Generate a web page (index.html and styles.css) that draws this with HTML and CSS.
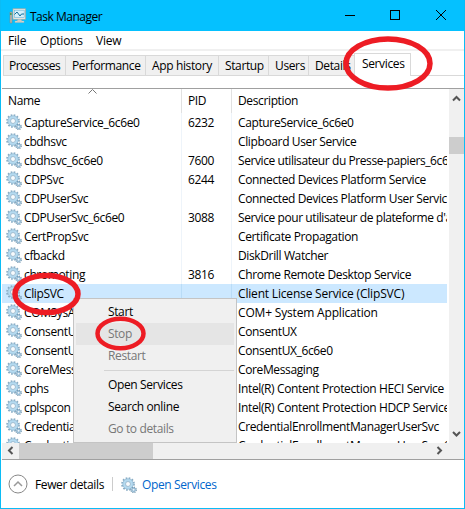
FILE: index.html
```html
<!DOCTYPE html>
<html lang="en">
<head>
<meta charset="utf-8">
<title>Task Manager</title>
<link rel="stylesheet" href="styles.css">
</head>
<body>
<svg class="defs" width="0" height="0">
  <symbol id="gear" viewBox="0 0 16 16">
    <circle cx="7" cy="7" r="5.9" fill="none" stroke="#85a9c2" stroke-width="1.9" stroke-dasharray="1.65 1.44"/>
    <circle cx="7" cy="7" r="4" fill="none" stroke="#b4daf0" stroke-width="2.8"/>
    <circle cx="7" cy="7" r="5.2" fill="none" stroke="#8eb3cc" stroke-width=".6"/>
    <circle cx="7" cy="7" r="2.5" fill="#f8fbfd" stroke="#7fa5c0" stroke-width=".7"/>
    <circle cx="12.6" cy="12.8" r="2.5" fill="none" stroke="#7195ae" stroke-width="1.5" stroke-dasharray="1.1 .86"/>
    <circle cx="12.6" cy="12.8" r="1.6" fill="#eef5fa" stroke="#91b9d4" stroke-width="1.2"/>
  </symbol>
</svg>
<div class="window">
  <header class="titlebar">
    <svg class="app-icon" width="18" height="16" viewBox="0 0 18 16">
      <path d="M1 4h2v11H1z" fill="#b9b9b4" stroke="#888" stroke-width=".6"/>
      <path d="M1.200 5h1.300v2H1.200z" fill="#3b983b"/>
      <rect x="4" y=".8" width="12.500" height="10.400" fill="#f1eee8" stroke="#aaa69e" stroke-width=".7"/>
      <rect x="5.300" y="2.200" width="9.900" height="7.400" fill="#d3effb" stroke="#6db4d8" stroke-width=".6"/>
      <path d="M5.500 6.500L8 4l3 4 1.500-2H15" fill="none" stroke="#136f9c"/>
      <path d="M9 11.500h3l1 1.500H8zM6 13h9v1.500H6z" fill="#e3e0d9" stroke="#aaa" stroke-width=".4"/>
    </svg>
    <h1 class="t-title">Task Manager</h1>
    <svg class="controls" width="102" height="12" viewBox="0 0 102 12" shape-rendering="crispEdges">
      <path d="M0 5.500h10" stroke="#000"/>
      <rect x="45.500" y=".5" width="9" height="9" fill="none" stroke="#000"/>
      <path d="M91 0l10 10M101 0L91 10" stroke="#000" shape-rendering="auto"/>
    </svg>
  </header>
  <nav class="menubar"><span class="m-file">File</span><span class="m-options">Options</span><span>View</span></nav>
  <div class="tabs">
    <span class="tab w-proc">Processes</span><span class="tab w-perf">Performance</span><span class="tab w-hist">App history</span><span class="tab w-start">Startup</span><span class="tab w-users">Users</span><span class="tab w-details">Details</span><span class="tab selected">Services</span><span class="tab-rest"></span>
  </div>
  <main class="list">
    <div class="grid">
      <div class="row head"><span class="name">Name<svg class="sort" width="9" height="5" viewBox="0 0 9 5"><path d="M.5 4.500l4-4 4 4" fill="none" stroke="#777"/></svg></span><span class="pid">PID</span><span class="desc">Description</span></div>
      <div class="row"><span class="name"><svg class="gear"><use href="#gear"/></svg>CaptureService_6c6e0</span><span class="pid">6232</span><span class="desc">CaptureService_6c6e0</span></div>
      <div class="row"><span class="name"><svg class="gear"><use href="#gear"/></svg>cbdhsvc</span><span class="pid"></span><span class="desc">Clipboard User Service</span></div>
      <div class="row"><span class="name"><svg class="gear"><use href="#gear"/></svg>cbdhsvc_6c6e0</span><span class="pid">7600</span><span class="desc tight">Service utilisateur du Presse-papiers_6c6e0</span></div>
      <div class="row"><span class="name"><svg class="gear"><use href="#gear"/></svg>CDPSvc</span><span class="pid">6244</span><span class="desc">Connected Devices Platform Service</span></div>
      <div class="row"><span class="name"><svg class="gear"><use href="#gear"/></svg>CDPUserSvc</span><span class="pid"></span><span class="desc">Connected Devices Platform User Service</span></div>
      <div class="row"><span class="name"><svg class="gear"><use href="#gear"/></svg>CDPUserSvc_6c6e0</span><span class="pid">3088</span><span class="desc tight">Service pour utilisateur de plateforme d'appareils</span></div>
      <div class="row"><span class="name"><svg class="gear"><use href="#gear"/></svg>CertPropSvc</span><span class="pid"></span><span class="desc">Certificate Propagation</span></div>
      <div class="row"><span class="name"><svg class="gear"><use href="#gear"/></svg>cfbackd</span><span class="pid"></span><span class="desc">DiskDrill Watcher</span></div>
      <div class="row"><span class="name"><svg class="gear"><use href="#gear"/></svg>chromoting</span><span class="pid">3816</span><span class="desc">Chrome Remote Desktop Service</span></div>
      <div class="row active"><span class="name"><svg class="gear"><use href="#gear"/></svg>ClipSVC</span><span class="pid"></span><span class="desc loose">Client License Service (ClipSVC)</span></div>
      <div class="row"><span class="name"><svg class="gear"><use href="#gear"/></svg>COMSysApp</span><span class="pid"></span><span class="desc loose">COM+ System Application</span></div>
      <div class="row"><span class="name"><svg class="gear"><use href="#gear"/></svg>ConsentUX</span><span class="pid"></span><span class="desc">ConsentUX</span></div>
      <div class="row"><span class="name"><svg class="gear"><use href="#gear"/></svg>ConsentUX_6c6e0</span><span class="pid"></span><span class="desc">ConsentUX_6c6e0</span></div>
      <div class="row"><span class="name"><svg class="gear"><use href="#gear"/></svg>CoreMessaging</span><span class="pid"></span><span class="desc">CoreMessaging</span></div>
      <div class="row"><span class="name"><svg class="gear"><use href="#gear"/></svg>cphs</span><span class="pid"></span><span class="desc">Intel(R) Content Protection HECI Service</span></div>
      <div class="row"><span class="name"><svg class="gear"><use href="#gear"/></svg>cplspcon</span><span class="pid"></span><span class="desc">Intel(R) Content Protection HDCP Service</span></div>
      <div class="row"><span class="name"><svg class="gear"><use href="#gear"/></svg>CredentialEnrollment</span><span class="pid"></span><span class="desc">CredentialEnrollmentManagerUserSvc</span></div>
      <div class="row"><span class="name"><svg class="gear"><use href="#gear"/></svg>CredentialEnrollment</span><span class="pid"></span><span class="desc">CredentialEnrollmentManagerUserSvc_6c6e0</span></div>
    </div>
    <div class="vscroll">
      <svg width="15" height="16" viewBox="0 0 15 16"><path d="M4 11.500L7.500 8l3.500 3.500" fill="none" stroke="#555" stroke-width="2"/></svg>
      <div class="vthumb"></div>
      <svg class="down" width="15" height="16" viewBox="0 0 15 16"><path d="M4 5l3.500 3.500L11 5" fill="none" stroke="#555" stroke-width="2"/></svg>
    </div>
  </main>
  <div class="hscroll">
    <svg width="17" height="16" viewBox="0 0 17 16"><path d="M10.500 4L7 7.500l3.500 3.500" fill="none" stroke="#555" stroke-width="2"/></svg>
    <div class="hthumb"></div>
    <svg class="right" width="17" height="16" viewBox="0 0 17 16"><path d="M4.500 4L8 7.500 4.500 11" fill="none" stroke="#555" stroke-width="2"/></svg>
  </div>
  <footer class="footer">
    <svg class="fewer" width="20" height="20" viewBox="0 0 20 20"><circle cx="10" cy="10" r="9" fill="#fff" stroke="#888"/><path d="M6 12l4-4 4 4" fill="none" stroke="#999" stroke-width="1.500"/></svg>
    <span class="f-text">Fewer details</span><span class="divider"></span>
    <svg class="gear"><use href="#gear"/></svg><a class="link">Open Services</a>
  </footer>
</div>
<div class="menu">
  <div class="item">Start</div>
  <div class="item off hover">Stop</div>
  <div class="item off">Restart</div>
  <hr>
  <div class="item">Open Services</div>
  <div class="item">Search online</div>
  <div class="item off">Go to details</div>
</div>
<svg class="marks" width="465" height="509" viewBox="0 0 465 509" fill="none" stroke="#ed1c24">
  <ellipse cx="388" cy="63.500" rx="42" ry="24.500" stroke-width="5.500"/>
  <ellipse cx="46.500" cy="294" rx="31.500" ry="18.500" stroke-width="5.500"/>
  <ellipse cx="120.500" cy="333.500" rx="23" ry="14.800" stroke-width="4.500"/>
</svg>
</body>
</html>
```

FILE: styles.css
```css
* { box-sizing: border-box; }
body {
  margin: 0;
  width: 465px;
  height: 509px;
  overflow: hidden;
  background: #fff;
  color: #000;
  font: 12px/19px "Open Sans", "Noto Sans", sans-serif;
  letter-spacing: -0.37px;
  white-space: nowrap;
}
svg { display: block; flex: none; }
.defs { position: absolute; }
.window {
  height: 509px;
  display: flex;
  flex-direction: column;
  border: 1px solid #0bbcf5;
  border-top: 0;
}
.titlebar {
  height: 31px;
  flex: none;
  display: flex;
  align-items: center;
  background: #05c1ff;
  padding: 0 17px 0 8px;
}
.titlebar h1 { margin: 1px 0 0 3px; font-size: 12px; font-weight: 400; letter-spacing: -0.5px; }
.controls { margin-left: auto; }
.menubar {
  height: 20px;
  flex: none;
  display: flex;
  padding: 0 7px;
  border-bottom: 2px solid #f0f0f0;
  letter-spacing: -0.2px;
}
.m-file { width: 32px; }
.m-options { width: 56px; }
.tabs { height: 25px; flex: none; display: flex; align-items: flex-end; padding-left: 2px; }
.tab {
  height: 21px;
  padding-left: 6px;
  background: #f0f0f0;
  border: 1px solid #d9d9d9;
  border-right: 0;
}
.w-proc { width: 62px; padding-left: 5px; letter-spacing: -0.5px; }
.w-perf { width: 80px; }
.w-hist { width: 73px; }
.w-start { width: 50px; }
.w-users { width: 40px; }
.w-details { width: 46px; }
.tab.selected {
  width: 57px;
  height: 23px;
  padding-left: 7px;
  background: #fff;
  border-right: 1px solid #d9d9d9;
  border-bottom: 0;
}
.tab-rest { flex: 1; border-bottom: 1px solid #d9d9d9; }
.list {
  height: 355px;
  flex: none;
  margin: 12px 0 0 1px;
  display: flex;
  border-top: 1px solid #a0a0a0;
  overflow: hidden;
}
.grid { width: 445px; flex: none; overflow: hidden; }
.row { display: flex; height: 19px; }
.name, .pid, .desc { padding-left: 6px; height: 19px; overflow: hidden; flex: none; }
.name { width: 180px; padding-left: 4px; display: flex; border-right: 1px solid #eef4fa; }
.pid { width: 50px; border-right: 1px solid #eef4fa; }
.desc { width: 215px; }
.desc.tight { letter-spacing: -0.42px; }
.desc.loose { letter-spacing: -0.18px; }
.head { height: 24px; line-height: 24px; }
.head span { height: 24px; border-color: #e1e1e1; }
.head .name { padding-left: 6px; }
.sort { margin: 0 0 0 48px; }
.gear { width: 16px; height: 16px; margin: 1px 2px 0 0; }
.active .name, .active .pid, .active .desc { background: #cce8ff; border-color: #b9dcf7; }
.vscroll { width: 15px; margin-left: auto; background: #f0f0f0; display: flex; flex-direction: column; }
.vthumb { height: 17px; margin-top: 32px; background: #cdcdcd; }
.down { margin-top: auto; }
.hscroll {
  height: 17px;
  flex: none;
  margin-left: 1px;
  display: flex;
  background: #f0f0f0;
  border-bottom: 1px solid #a0a0a0;
}
.hthumb { width: 134px; background: #cdcdcd; }
.right { margin-left: auto; margin-right: 14px; }
.footer { flex: 1; display: flex; align-items: center; padding-left: 7px; }
.f-text { margin-left: 7px; }
.divider { width: 1px; height: 14px; margin: 0 8px; background: #ccc; }
.link { color: #0066cc; margin-left: 3px; }
.menu {
  position: absolute;
  left: 73px;
  top: 298px;
  width: 164px;
  height: 145px;
  padding: 2px;
  background: #f0f0f0;
  border: 1px solid #c4c4c4;
  line-height: 22px;
}
.item { height: 22px; padding-left: 32px; }
.off { color: #777; }
.hover { background: #e5e5e5; }
.menu hr { margin: 3px 0 3px 28px; border: 0; height: 1px; background: #d4d4d4; }
.marks { position: absolute; left: 0; top: 0; }
```
